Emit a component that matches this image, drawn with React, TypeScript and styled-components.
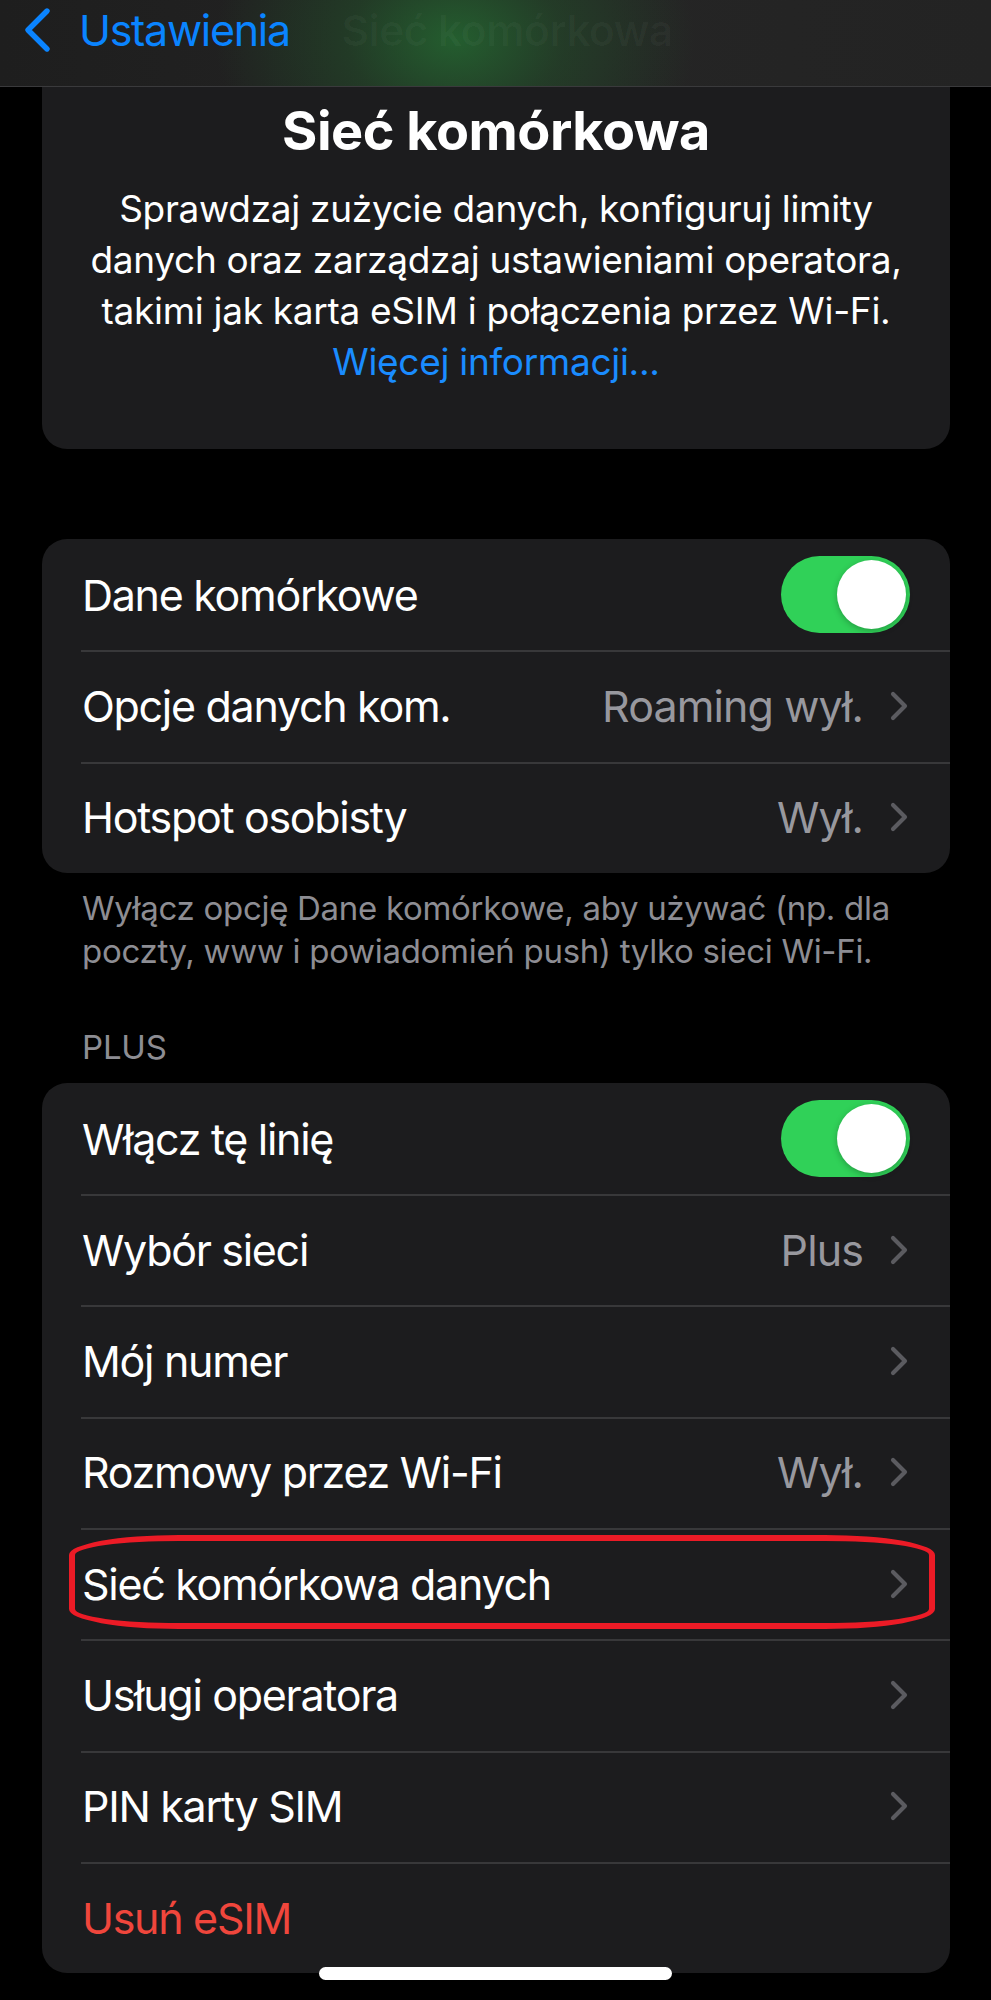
import React from "react";
import styled, { createGlobalStyle } from "styled-components";

const GlobalStyle = createGlobalStyle`
  html, body {
    margin: 0;
    padding: 0;
    background: #000;
  }
  body {
    font-family: Inter, "Noto Sans", "Liberation Sans", sans-serif;
    -webkit-font-smoothing: antialiased;
  }
`;

type Row = {
  label: string;
  value?: string;
  toggle?: boolean;
  chevron?: boolean;
  danger?: boolean;
  marked?: boolean;
};

const dataRows: Row[] = [
  { label: "Dane komórkowe", toggle: true },
  { label: "Opcje danych kom.", value: "Roaming wył.", chevron: true },
  { label: "Hotspot osobisty", value: "Wył.", chevron: true },
];

const plusRows: Row[] = [
  { label: "Włącz tę linię", toggle: true },
  { label: "Wybór sieci", value: "Plus", chevron: true },
  { label: "Mój numer", chevron: true },
  { label: "Rozmowy przez Wi-Fi", value: "Wył.", chevron: true },
  { label: "Sieć komórkowa danych", chevron: true, marked: true },
  { label: "Usługi operatora", chevron: true },
  { label: "PIN karty SIM", chevron: true },
  { label: "Usuń eSIM", danger: true },
];

const Chevron = () => (
  <svg width="18" height="30" viewBox="0 0 18 30" fill="none">
    <polyline
      points="3,3 15,15 3,27"
      stroke="#5b5b60"
      strokeWidth="4.2"
      strokeLinecap="round"
      strokeLinejoin="round"
    />
  </svg>
);

const BackChevron = () => (
  <svg width="28" height="46" viewBox="0 0 28 46" fill="none">
    <polyline
      points="24,4 5,23 24,42"
      stroke="#0a84ff"
      strokeWidth="5.4"
      strokeLinecap="round"
      strokeLinejoin="round"
    />
  </svg>
);

const App = () => {
  return (
    <Page>
      <GlobalStyle />
      <NavBar>
        <BackButton>
          <BackChevron />
          <span>Ustawienia</span>
        </BackButton>
        <NavTitle>Sieć komórkowa</NavTitle>
        <span />
      </NavBar>

      <HeaderCard>
        <HeaderTitle>Sieć komórkowa</HeaderTitle>
        <HeaderText>
          Sprawdzaj zużycie danych, konfiguruj limity
          <br />
          danych oraz zarządzaj ustawieniami operatora,
          <br />
          takimi jak karta eSIM i połączenia przez Wi-Fi.
          <br />
          <MoreLink>Więcej informacji...</MoreLink>
        </HeaderText>
      </HeaderCard>

      <Group $top={90}>
        {dataRows.map((r) => (
          <SettingRow key={r.label} row={r} />
        ))}
      </Group>
      <Footer>
        Wyłącz opcję Dane komórkowe, aby używać (np. dla
        <br />
        poczty, www i powiadomień push) tylko sieci Wi-Fi.
      </Footer>

      <SectionHeader>PLUS</SectionHeader>
      <Group $top={0}>
        {plusRows.map((r) => (
          <SettingRow key={r.label} row={r} />
        ))}
      </Group>

      <HomeIndicator />
    </Page>
  );
};

const SettingRow = ({ row }: { row: Row }) => (
  <RowWrap>
    <RowLabel $danger={row.danger}>{row.label}</RowLabel>
    <RowRight>
      {row.value && <RowValue>{row.value}</RowValue>}
      {row.chevron && <Chevron />}
      {row.toggle && (
        <Toggle>
          <Knob />
        </Toggle>
      )}
    </RowRight>
    {row.marked && <Marker />}
  </RowWrap>
);

export default App;

const Page = styled.div`
  width: 991px;
  min-height: 2000px;
  background: #000;
  position: relative;
  overflow: hidden;
`;

const NavBar = styled.div`
  height: 87px;
  display: grid;
  grid-template-columns: 1fr auto 1fr;
  align-items: start;
  padding: 4px 0 0 23px;
  box-sizing: border-box;
  background:
    radial-gradient(ellipse 240px 170px at 455px 40px, rgba(36, 100, 48, 0.9) 0%, rgba(34, 82, 42, 0.5) 45%, rgba(34, 34, 34, 0) 100%),
    linear-gradient(90deg, #1e1e1e, #252525 60%, #232323);
  border-bottom: 1px solid #3a3a3c;
`;

const BackButton = styled.div`
  display: flex;
  align-items: center;
  gap: 28px;
  color: #0a84ff;
  font-size: 43px;
  line-height: 52px;
  letter-spacing: -1.3px;
`;

const NavTitle = styled.div`
  color: rgba(255, 255, 255, 0.03);
  font-size: 43px;
  line-height: 52px;
  font-weight: 600;
  letter-spacing: -0.8px;
`;

const HeaderCard = styled.div`
  margin: 0 41px 0 42px;
  background: #1c1c1e;
  border-radius: 0 0 25px 25px;
  padding: 12px 10px 62px;
  text-align: center;
`;

const HeaderTitle = styled.h1`
  margin: 0;
  color: #fff;
  font-size: 54px;
  font-weight: 700;
  letter-spacing: -0.5px;
  line-height: 64px;
`;

const HeaderText = styled.p`
  margin: 20px 0 0;
  color: #fff;
  font-size: 37px;
  line-height: 51px;
  letter-spacing: -0.3px;
`;

const MoreLink = styled.span`
  color: #1a8cff;
`;

const Group = styled.div<{ $top: number }>`
  margin: ${(p) => p.$top}px 41px 0 42px;
  background: #1c1c1e;
  border-radius: 25px;
  overflow: hidden;
`;

const RowWrap = styled.div`
  position: relative;
  height: 111.3px;
  display: flex;
  align-items: center;
  justify-content: space-between;
  padding: 0 40px;
  box-sizing: border-box;

  & + &::before {
    content: "";
    position: absolute;
    top: 0;
    left: 39px;
    right: 0;
    height: 2px;
    background: #38383a;
  }
`;

const RowLabel = styled.span<{ $danger?: boolean }>`
  color: ${(p) => (p.$danger ? "#f0463c" : "#fff")};
  font-size: 43px;
  letter-spacing: -1.3px;
`;

const RowRight = styled.div`
  display: flex;
  align-items: center;
  gap: 27px;
  margin-right: 2px;
`;

const RowValue = styled.span`
  color: #98989e;
  font-size: 43px;
  letter-spacing: -0.9px;
`;

const Toggle = styled.span`
  width: 129px;
  height: 77px;
  border-radius: 39px;
  background: #30d158;
  display: flex;
  align-items: center;
  justify-content: flex-end;
  padding: 0 4px;
  box-sizing: border-box;
  margin-right: -2px;
`;

const Knob = styled.span`
  width: 69px;
  height: 69px;
  border-radius: 50%;
  background: #fff;
  box-shadow: 0 2px 6px rgba(0, 0, 0, 0.25);
`;

const Marker = styled.span`
  position: absolute;
  left: 27px;
  right: 15px;
  top: 7px;
  bottom: 10px;
  border: 6px solid #ec1b26;
  border-radius: 110px / 20px;
  pointer-events: none;
`;

const Footer = styled.p`
  margin: 14px 60px 0 82px;
  color: #8d8d93;
  font-size: 33px;
  line-height: 43px;
  letter-spacing: -0.3px;
`;

const SectionHeader = styled.div`
  margin: 54px 0 0 82px;
  height: 56px;
  color: #8d8d93;
  font-size: 33px;
  letter-spacing: -0.2px;
`;

const HomeIndicator = styled.div`
  position: absolute;
  left: 319px;
  top: 1967px;
  width: 353px;
  height: 13px;
  border-radius: 7px;
  background: #fff;
`;
